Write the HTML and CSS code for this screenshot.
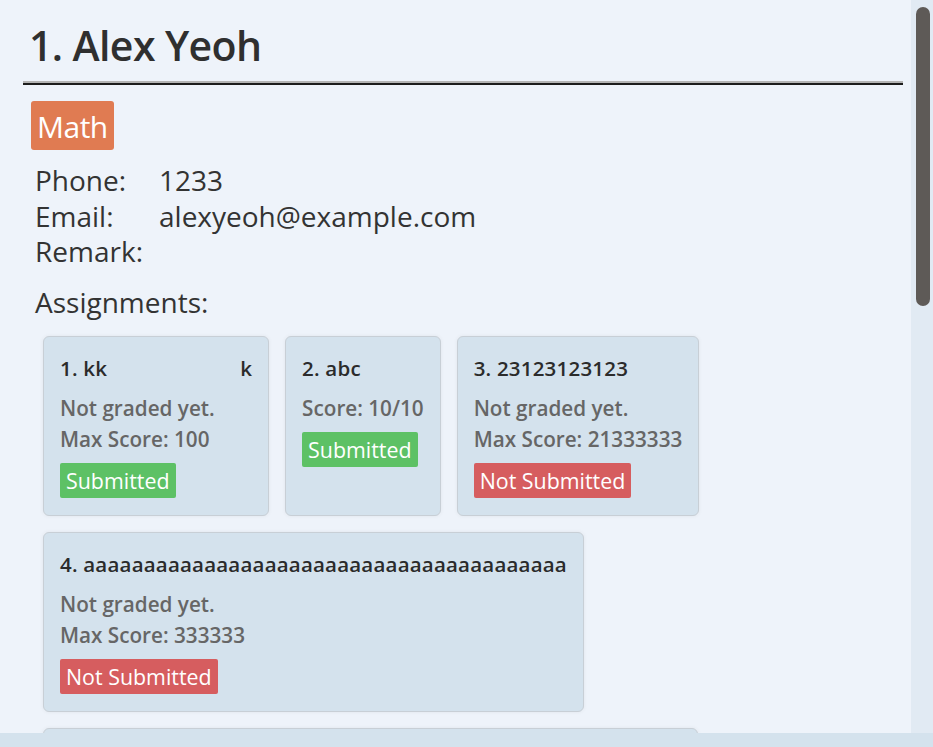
FILE: index.html
```html
<!DOCTYPE html>
<html lang="en">
<head>
<meta charset="utf-8">
<title>Alex Yeoh</title>
<link rel="stylesheet" href="styles.css">
</head>
<body>
<div class="app">
  <div class="main">
    <div class="content">
      <h1 class="name">1. Alex Yeoh</h1>
      <div class="rule"></div>
      <div class="tags"><span class="tag">Math</span></div>
      <div class="details">
        <span class="label">Phone:</span><span class="value">1233</span>
        <span class="label">Email:</span><span class="value">alexyeoh@example.com</span>
        <span class="label">Remark:</span><span class="value"></span>
      </div>
      <div class="section-title">Assignments:</div>
      <div class="cards">
        <div class="card">
          <div class="card-title title-split"><span>1. kk</span><span>k</span></div>
          <div class="muted">Not graded yet.</div>
          <div class="muted">Max Score: 100</div>
          <span class="status ok">Submitted</span>
        </div>
        <div class="card">
          <div class="card-title">2. abc</div>
          <div class="muted">Score: 10/10</div>
          <span class="status ok">Submitted</span>
        </div>
        <div class="card">
          <div class="card-title">3. 23123123123</div>
          <div class="muted">Not graded yet.</div>
          <div class="muted">Max Score: 21333333</div>
          <span class="status bad">Not Submitted</span>
        </div>
        <div class="card">
          <div class="card-title">4. aaaaaaaaaaaaaaaaaaaaaaaaaaaaaaaaaaaaaaaa</div>
          <div class="muted">Not graded yet.</div>
          <div class="muted">Max Score: 333333</div>
          <span class="status bad">Not Submitted</span>
        </div>
        <div class="card peek"></div>
      </div>
    </div>
    <div class="vscroll"><div class="thumb"></div></div>
  </div>
  <div class="hbar"></div>
</div>
</body>
</html>
```

FILE: styles.css
```css
html, body {
  margin: 0;
  padding: 0;
  height: 100%;
  overflow: hidden;
}
body {
  background: #eef3fa;
  font-family: "Open Sans", "Noto Sans", sans-serif;
  color: #333333;
}
.app {
  display: flex;
  flex-direction: column;
  height: 100vh;
}
.main {
  flex: 1;
  min-height: 0;
  display: flex;
}
.content {
  flex: 1;
  min-width: 0;
  overflow: hidden;
  padding: 0 8px 0 23px;
}
.vscroll {
  width: 22px;
  box-sizing: border-box;
  padding: 7px 3px 0 5px;
  background: #e1eaf3;
}
.thumb {
  height: 299px;
  border-radius: 7px;
  background: #5e5a57;
}
.hbar {
  height: 14px;
  background: #d4e2ed;
}
.name {
  margin: 0 0 8px 6px;
  padding-top: 17px;
  font-size: 41px;
  line-height: 56px;
  font-weight: 600;
  letter-spacing: -0.6px;
  color: #2f2f2f;
}
.rule {
  height: 0;
  border-top: 2px solid #b4b4b4;
  border-bottom: 2px solid #1c1c1c;
}
.tags {
  margin: 16px 0 0 8px;
  display: flex;
}
.tag {
  background: #e07b52;
  color: #ffffff;
  font-size: 30px;
  font-weight: 500;
  letter-spacing: -0.5px;
  line-height: 49px;
  height: 49px;
  padding: 1px 6px 0;
  box-sizing: border-box;
  border-radius: 3px;
}
.details {
  margin: 13px 0 0 12px;
  display: grid;
  grid-template-columns: 124px auto;
  font-size: 28px;
  line-height: 35.5px;
  color: #333333;
}
.section-title {
  margin: 15.5px 0 0 12px;
  font-size: 28px;
  line-height: 35.5px;
}
.cards {
  margin: 15px 0 0 20px;
  display: flex;
  flex-wrap: wrap;
  gap: 16px;
  align-items: flex-start;
}
.card {
  box-sizing: border-box;
  height: 180px;
  background: #d4e2ed;
  border: 1px solid #c8cfd6;
  border-radius: 6px;
  padding: 17px 16px 16px 16px;
  box-shadow: 0 0 4px rgba(0, 0, 0, 0.06);
  display: flex;
  flex-direction: column;
  align-items: flex-start;
}
.peek {
  width: 655px;
}
.card-title {
  font-size: 20.5px;
  font-weight: 600;
  line-height: 28px;
  letter-spacing: 0.2px;
  color: #2b2b2b;
  margin-bottom: 11px;
  white-space: nowrap;
}
.title-split {
  display: flex;
  justify-content: space-between;
  gap: 133px;
  align-self: stretch;
}
.muted {
  font-size: 20.7px;
  font-weight: 600;
  line-height: 31px;
  color: #666666;
  white-space: nowrap;
}
.status {
  margin-top: 8.5px;
  height: 35px;
  line-height: 35px;
  padding: 0 6px;
  font-size: 21.4px;
  color: #ffffff;
  border-radius: 2px;
  white-space: nowrap;
}
.ok {
  background: #5dc165;
}
.bad {
  background: #d65d5f;
}
```
